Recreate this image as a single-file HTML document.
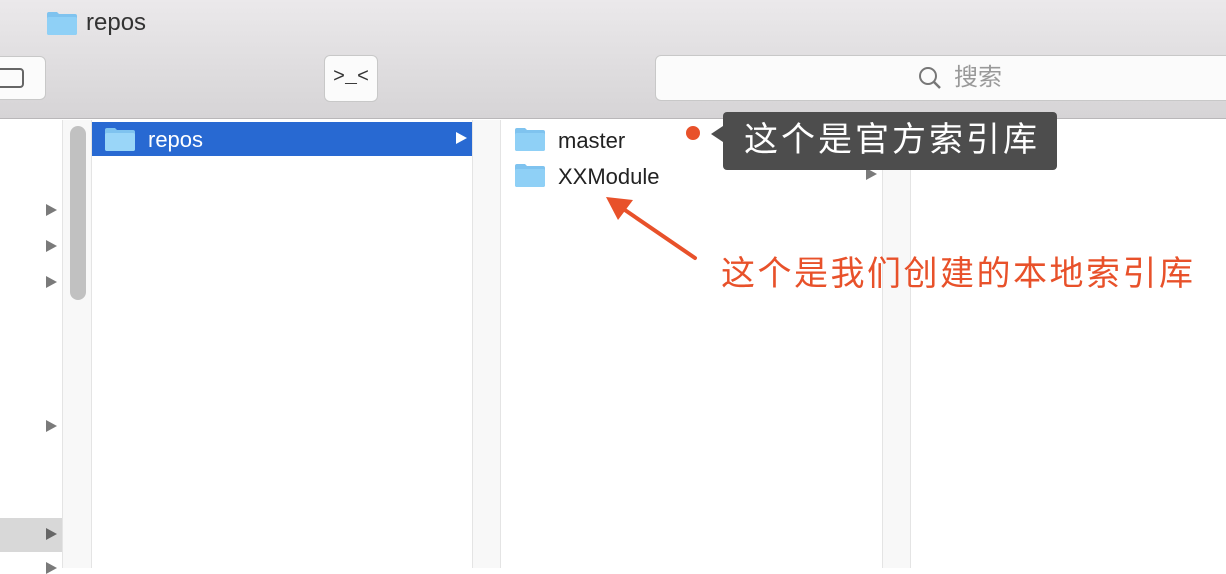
<!DOCTYPE html>
<html><head><meta charset="utf-8"><style>
*{margin:0;padding:0;box-sizing:border-box}
body{width:1226px;height:568px;overflow:hidden;position:relative;background:#fff;font-family:"Liberation Sans","Noto Sans CJK SC",sans-serif}
.abs{position:absolute}
.tri{position:absolute;width:0;height:0;border-top:6px solid transparent;border-bottom:6px solid transparent;border-left:11px solid #7a7a7a}
</style></head><body>
<div class="abs" style="left:0;top:0;width:1226px;height:119px;background:linear-gradient(#ebe9eb,#d6d4d6);border-bottom:1px solid #b9b7b9"></div>
<svg class="abs" style="left:46px;top:10px" width="32" height="26"><path d="M1 4 Q1 2 3 2 H11 L13 4 H29 Q31 4 31 6 V23 Q31 25 29 25 H3 Q1 25 1 23Z" fill="#7fc3ef"/><rect x="1" y="7" width="30" height="18" rx="2" fill="#8fd0f6"/></svg>
<div class="abs" style="left:86px;top:9px;font-size:24px;color:#333">repos</div>
<div class="abs" style="left:-10px;top:56px;width:56px;height:44px;background:#fbfbfb;border:1px solid #c8c8c8;border-radius:6px"></div>
<div class="abs" style="left:-6px;top:68px;width:30px;height:20px;border:2px solid #666;border-radius:4px"></div>
<div class="abs" style="left:324px;top:55px;width:54px;height:47px;background:#fbfbfb;border:1px solid #c8c8c8;border-radius:6px"></div>
<div class="abs" style="left:324px;top:66px;width:54px;font-family:'Liberation Mono',monospace;font-size:20px;color:#333;text-align:center;line-height:24px">&gt;_&lt;</div>
<div class="abs" style="left:655px;top:55px;width:590px;height:46px;background:#fbfbfb;border:1px solid #c8c8c8;border-radius:6px"></div>
<svg class="abs" style="left:917px;top:65px" width="28" height="26"><circle cx="11" cy="11" r="8" stroke="#777" stroke-width="2" fill="none"/><path d="M17 17 L23 23" stroke="#777" stroke-width="2.5"/></svg>
<div class="abs" style="left:954px;top:62px;font-size:24px;color:#999;line-height:32px">搜索</div>

<div class="abs" style="left:62px;top:120px;width:30px;height:448px;background:#f8f8f8;border-left:1px solid #e4e4e4;border-right:1px solid #e4e4e4"></div>
<div class="abs" style="left:70px;top:126px;width:16px;height:174px;background:#c1c1c1;border-radius:8px"></div>
<div class="abs" style="left:472px;top:120px;width:29px;height:448px;background:#f8f8f8;border-left:1px solid #e4e4e4;border-right:1px solid #e4e4e4"></div>
<div class="abs" style="left:882px;top:120px;width:29px;height:448px;background:#f8f8f8;border-left:1px solid #e4e4e4;border-right:1px solid #e4e4e4"></div>

<div class="tri" style="left:46px;top:204px"></div>
<div class="tri" style="left:46px;top:240px"></div>
<div class="tri" style="left:46px;top:276px"></div>
<div class="tri" style="left:46px;top:420px"></div>
<div class="abs" style="left:0;top:518px;width:62px;height:34px;background:#d8d8d8"></div>
<div class="tri" style="left:46px;top:528px;border-left-color:#666"></div>
<div class="tri" style="left:46px;top:562px"></div>

<div class="abs" style="left:92px;top:122px;width:380px;height:34px;background:#2869d2"></div>
<svg class="abs" style="left:104px;top:126px" width="32" height="26"><path d="M1 4 Q1 2 3 2 H11 L13 4 H29 Q31 4 31 6 V23 Q31 25 29 25 H3 Q1 25 1 23Z" fill="#7fc3ef"/><rect x="1" y="7" width="30" height="18" rx="2" fill="#9ad6f8"/></svg>
<div class="abs" style="left:148px;top:127px;font-size:22px;color:#fff">repos</div>
<div class="tri" style="left:456px;top:132px;border-left-color:#fff"></div>

<svg class="abs" style="left:514px;top:126px" width="32" height="26"><path d="M1 4 Q1 2 3 2 H11 L13 4 H29 Q31 4 31 6 V23 Q31 25 29 25 H3 Q1 25 1 23Z" fill="#7fc3ef"/><rect x="1" y="7" width="30" height="18" rx="2" fill="#8fd0f6"/></svg>
<div class="abs" style="left:558px;top:128px;font-size:22px;color:#222">master</div>
<svg class="abs" style="left:514px;top:162px" width="32" height="26"><path d="M1 4 Q1 2 3 2 H11 L13 4 H29 Q31 4 31 6 V23 Q31 25 29 25 H3 Q1 25 1 23Z" fill="#7fc3ef"/><rect x="1" y="7" width="30" height="18" rx="2" fill="#8fd0f6"/></svg>
<div class="abs" style="left:558px;top:164px;font-size:22px;color:#222">XXModule</div>
<div class="tri" style="left:866px;top:168px"></div>

<div class="abs" style="left:686px;top:126px;width:14px;height:14px;border-radius:50%;background:#e8512a"></div>
<div class="abs" style="left:723px;top:112px;width:334px;height:58px;background:#4d4d4d;border-radius:4px;color:#fff;font-size:34px;line-height:56px;padding-left:21px;letter-spacing:3px;white-space:nowrap">这个是官方索引库</div>
<div class="abs" style="left:711px;top:126px;width:0;height:0;border-top:8px solid transparent;border-bottom:8px solid transparent;border-right:12px solid #4d4d4d"></div>

<svg class="abs" style="left:0;top:0" width="1226" height="568"><path d="M695 258 L622 208" stroke="#e8512a" stroke-width="4" stroke-linecap="round"/><path d="M606 197 L633 200 L618 220Z" fill="#e8512a"/></svg>
<div class="abs" style="left:721px;top:246px;font-size:34px;color:#e8512a;letter-spacing:2.5px;white-space:nowrap">这个是我们创建的本地索引库</div>
</body></html>
